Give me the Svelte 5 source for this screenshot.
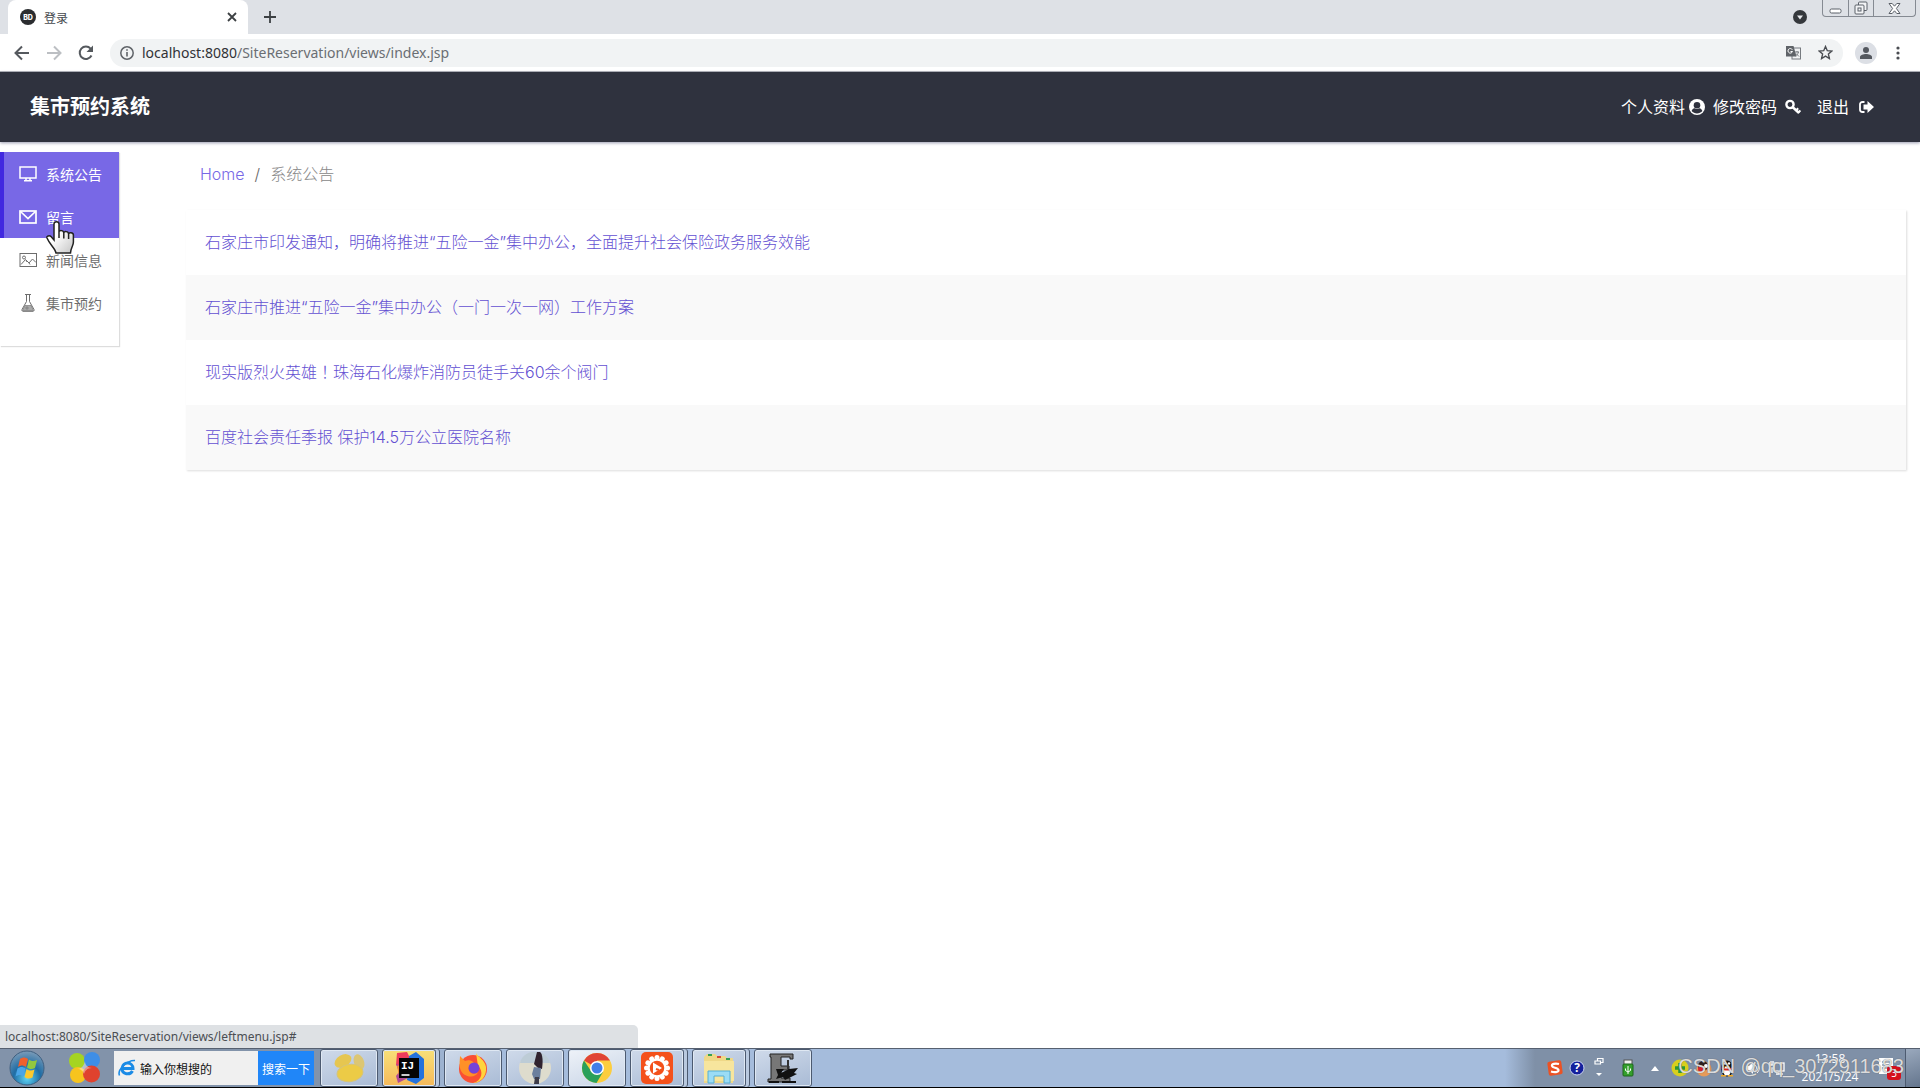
<script>
  const address = { host: "localhost:8080", path: "/SiteReservation/views/index.jsp" };

  const menu = [
    { label: "系统公告", icon: "screen", active: true },
    { label: "留言", icon: "mail", active: true },
    { label: "新闻信息", icon: "picture", active: false },
    { label: "集市预约", icon: "flask", active: false }
  ];

  const notices = [
    "石家庄市印发通知，明确将推进“五险一金”集中办公，全面提升社会保险政务服务效能",
    "石家庄市推进“五险一金”集中办公（一门一次一网）工作方案",
    "现实版烈火英雄！珠海石化爆炸消防员徒手关60余个阀门",
    "百度社会责任季报 保护14.5万公立医院名称"
  ];

  const apps = [
    { name: "blob", title: "Search" },
    { name: "idea", title: "IntelliJ IDEA" },
    { name: "firefox", title: "Firefox" },
    { name: "photo", title: "Photo" },
    { name: "chrome", title: "Chrome" },
    { name: "recorder", title: "Recorder" },
    { name: "explorer", title: "Explorer" },
    { name: "editor", title: "Editor" }
  ];
  const stacked = ["idea", "recorder", "explorer"];

  let keyword = $state("输入你想搜的");

  // the exclamation mark is set apart so it can sit in the middle of its cell
  function splitMarks(text) {
    return text.split(/(！)/).map((part, i) => ({ part, mark: i % 2 === 1 }));
  }
</script>

<div class="desktop">
  <!-- browser chrome -->
  <div class="tabs">
    <div class="tab">
      <svg class="favicon" viewBox="0 0 16 16">
        <circle cx="8" cy="8" r="8" fill="#2b2d30" />
        <text x="8" y="10.5" text-anchor="middle" font-size="7" font-weight="800" font-family="Inter, sans-serif" fill="#fff">BD</text>
      </svg>
      <span class="tab-title">登录</span>
      <button class="tab-close" aria-label="Close tab">
        <svg width="10" height="10" viewBox="0 0 10 10"><path d="M1 1l8 8M9 1l-8 8" stroke="#3c4043" stroke-width="1.8" /></svg>
      </button>
    </div>
    <button class="tab-new" aria-label="New tab">
      <svg width="12" height="12" viewBox="0 0 12 12"><path d="M6 0v12M0 6h12" stroke="#3c4043" stroke-width="1.8" /></svg>
    </button>
    <button class="tab-search" aria-label="Search tabs">
      <svg width="14" height="14" viewBox="0 0 14 14"><circle cx="7" cy="7" r="7" fill="#35383c" /><path d="M4 5.500h6l-3 4z" fill="#e8eaed" /></svg>
    </button>
    <div class="win-buttons">
      <button aria-label="Minimize">
        <svg width="13" height="13" viewBox="0 0 13 13"><rect x="1" y="7" width="11" height="4" rx="1.500" fill="#fff" stroke="#5b6068" /></svg>
      </button>
      <button aria-label="Restore">
        <svg width="14" height="14" viewBox="0 0 14 14" fill="#f3f4f6" stroke="#5b6068"><rect x="4.500" y="1" width="8.500" height="8.500" rx="1" /><rect x="1" y="4" width="9" height="9" rx="1" /><rect x="4" y="7" width="3" height="3" /></svg>
      </button>
      <button class="wide" aria-label="Close">
        <svg width="13" height="13" viewBox="0 0 13 13"><path d="M1 1.500h3.200l2.300 2.700 2.300-2.700H12L8.400 6.500l3.600 5H8.800L6.500 8.800l-2.300 2.700H1l3.600-5z" fill="#fff" stroke="#5b6068" /></svg>
      </button>
    </div>
  </div>

  <div class="toolbar">
    <button class="nav" aria-label="Back">
      <svg width="16" height="16" viewBox="0 0 16 16" fill="none" stroke="#55595e" stroke-width="2"><path d="M15 8H2M8 1.500L1.500 8 8 14.500" /></svg>
    </button>
    <button class="nav" aria-label="Forward">
      <svg width="16" height="16" viewBox="0 0 16 16" fill="none" stroke="#bcbfc3" stroke-width="2"><path d="M1 8h13M8 1.500L14.500 8 8 14.500" /></svg>
    </button>
    <button class="nav" aria-label="Reload">
      <svg width="16" height="16" viewBox="0 0 16 16" fill="none" stroke="#55595e" stroke-width="2"><path d="M13.500 10.500A6.200 6.200 0 1 1 12.600 3.600L14 5" /><path d="M15 0.500v6.500H8.500z" fill="#55595e" stroke="none" /></svg>
    </button>
    <div class="omnibox">
      <svg width="14" height="14" viewBox="0 0 14 14" fill="none" stroke="#5f6368"><circle cx="7" cy="7" r="6.200" stroke-width="1.500" /><path d="M7 6v4.500M7 3.200v1.600" stroke-width="1.600" /></svg>
      <span class="url"><b>{address.host}</b>{address.path}</span>
      <button aria-label="Translate">
        <svg width="15" height="15" viewBox="0 0 15 15"><rect x="6" y="3" width="8.500" height="11" fill="#f1f3f4" stroke="#777b80" /><path d="M0 1h7.500l3 10.500H0z" fill="#5f6368" /><path d="M6.300 4.700A2.300 2.300 0 1 0 6.500 6.500H4.500" fill="none" stroke="#fff" /><path d="M9 7h4M11 6v1M12.500 7c-.5 2-2 3.500-3 4M10 8.500l3 3" fill="none" stroke="#777b80" /></svg>
      </button>
      <button class="star" aria-label="Bookmark">
        <svg width="15" height="15" viewBox="0 0 15 15"><path d="M7.500 1.500l1.800 4.200 4.500.4-3.400 3 1 4.400-3.900-2.400-3.900 2.400 1-4.400-3.400-3 4.500-.4z" fill="none" stroke="#4a4d52" stroke-width="1.400" /></svg>
      </button>
    </div>
    <button class="avatar" aria-label="Profile">
      <svg width="14" height="14" viewBox="0 0 14 14" fill="#54585f"><circle cx="7" cy="4" r="3" /><path d="M1 13v-2c0-2 3.500-3 6-3s6 1 6 3v2z" /></svg>
    </button>
    <button aria-label="Menu">
      <svg width="4" height="14" viewBox="0 0 4 14" fill="#4a4d52"><circle cx="2" cy="2" r="1.600" /><circle cx="2" cy="7" r="1.600" /><circle cx="2" cy="12" r="1.600" /></svg>
    </button>
  </div>

  <!-- page -->
  <header>
    <h1>集市预约系统</h1>
    <nav>
      <a href="#profile">个人资料
        <svg width="16" height="16" viewBox="0 0 16 16"><circle cx="8" cy="8" r="8" fill="#fff" /><circle cx="8" cy="6.200" r="3.300" fill="#2f323e" /><path d="M2.600 12C3.500 9.800 5 9.300 5.700 9.300c1.400 1 3.200 1 4.600 0 .9 0 2.300.6 3.100 2.700-2.600 3.300-8.200 3.300-10.800 0z" fill="#2f323e" /></svg>
      </a>
      <a class="password" href="#password">修改密码
        <svg width="16" height="16" viewBox="0 0 16 16" fill="none" stroke="#fff"><circle cx="5" cy="5.500" r="3.600" stroke-width="2.400" /><path d="M7.500 8l6.500 6" stroke-width="2.400" /><path d="M11 11.500l2.200-2.200M13.200 13.700l2.200-2.200" stroke-width="2" /></svg>
      </a>
      <a class="logout" href="#logout">退出
        <svg width="15" height="14" viewBox="0 0 15 14"><path d="M5.500 2H3.500C2 2 1 3 1 4.200v5.600C1 11 2 12 3.500 12h2" fill="none" stroke="#fff" stroke-width="1.800" /><path d="M4.500 4.500h4V1L15 7l-6.500 6V9.500h-4z" fill="#fff" /></svg>
      </a>
    </nav>
  </header>

  <div class="body">
    <aside>
      {#each menu as item}
        <a href="#{item.icon}" class:active={item.active}>
          <svg width="18" height="18" viewBox="0 0 18 18" fill="none" stroke="currentColor">
            {#if item.icon === "screen"}
              <rect x="1" y="2" width="16" height="11" stroke-width="1.500" /><path d="M7 13v2.500M11 13v2.500M5 15.800h8" stroke-width="1.500" />
            {:else if item.icon === "mail"}
              <rect x="1" y="3" width="16" height="12" stroke-width="1.700" /><path d="M1.500 3.500L9 10.500l7.500-7" stroke-width="1.700" />
            {:else if item.icon === "picture"}
              <rect x="1" y="2.500" width="16.500" height="13" /><path d="M2 13.500l4.500-5 3.500 3.500 3.500-4 3.500 3.500M7 9l1 2M10 12l1 1.500" /><circle cx="5" cy="6.500" r="1.500" />
            {:else}
              <path d="M6 .5h6M7.500 1v6.500L3 15.500c-.3 1 .2 1.800 1 1.800h10c.8 0 1.300-.8 1-1.800L10.500 7.500V1" /><path d="M6 11.500h6l2.500 5h-11z" fill="#aaa" stroke-width=".6" /><circle cx="8" cy="14" r="1" fill="#fff" />
            {/if}
          </svg>
          {item.label}
        </a>
      {/each}
    </aside>

    <main>
      <div class="breadcrumb"><a href="#home">Home</a><i>/</i><span>系统公告</span></div>
      <ul>
        {#each notices as notice}
          <li><a href="#notice">{#each splitMarks(notice) as { part, mark }}<span class:mark>{part}</span>{/each}</a></li>
        {/each}
      </ul>
    </main>
  </div>

  <div class="status">localhost:8080/SiteReservation/views/leftmenu.jsp#</div>

  <svg class="cursor" width="30" height="34" viewBox="0 0 30 34">
    <defs><linearGradient id="hand" x1="0" y1="0" x2="1" y2="1"><stop offset="0.400" stop-color="#fff" /><stop offset="1" stop-color="#c4c4c4" /></linearGradient></defs>
    <path d="M8 3c0-3 5-3 5 0v8c0-2 4.800-2 4.800 1 0-2 4.800-2 4.800 1 0-2 4.800-1.500 4.800 1v7c0 4-2.400 5-2.900 11H10C9 27 4 24 1 17c-.8-2 2.500-3 4-1.500L8 19z" fill="url(#hand)" stroke="#222" stroke-width="1.500" />
    <path d="M13 11v6M17.800 12v5.500M22.600 13v5" stroke="#222" stroke-width="1.500" />
  </svg>

  <!-- windows taskbar -->
  <footer>
    <button class="start" aria-label="Start">
      <svg width="36" height="36" viewBox="0 0 36 36">
        <defs><radialGradient id="orb" cx=".5" cy=".8" r=".8"><stop offset="0" stop-color="#5fd5f5" /><stop offset=".5" stop-color="#1f6da5" /><stop offset="1" stop-color="#7d9cb8" /></radialGradient></defs>
        <circle cx="18" cy="18" r="17" fill="url(#orb)" stroke="#3f5f80" />
        <path d="M11 9c3-2 5-2 8 0l-2 8c-3-2-5-2-8 0z" fill="#f0602c" /><path d="M20 9.500c3 2 5 2 8 .5l-2 8c-3 1.500-5 1.500-8-.5z" fill="#93c83e" /><path d="M8.500 18.500c3-2 5-2 8 0l-2 8c-3-2-5-2-8 0z" fill="#4aa5e8" /><path d="M17.500 19c3 2 5 2 8 .5l-2 8c-3 1.500-5 1.500-8-.5z" fill="#fcc92f" />
      </svg>
    </button>
    <button class="balls" aria-label="Apps">
      <svg width="32" height="32" viewBox="0 0 32 32"><circle cx="8" cy="9" r="8" fill="#a5d422" /><circle cx="23" cy="8" r="8" fill="#3e8ee6" /><circle cx="9" cy="23" r="8" fill="#f7c41e" /><circle cx="22.500" cy="22" r="8.500" fill="#e0422e" /><path d="M8 17c4 0 7-3 8-8 0 4 3 7 7 7-5 0-7 3-8 6-1-3-3-5-7-5z" fill="#fff" opacity=".4" /></svg>
    </button>
    <div class="search">
      <svg width="18" height="18" viewBox="0 0 18 18" fill="none"><path d="M3.500 9.500h11.500c0-7-10.500-7.500-11 0 0 6 8 7 10.500 2.500" stroke="#1b8be6" stroke-width="3" /><path d="M1.500 16.500C-1 11 9 1 17 1.500" stroke="#1b8be6" stroke-width="1.600" /></svg>
      <input aria-label="搜索" bind:value={keyword} />
      <button>搜索一下</button>
    </div>

    <div class="apps">
      {#each apps as app}
        <button class="app {app.name}" class:stacked={stacked.includes(app.name)} aria-label={app.title}>
          <svg width="32" height="32" viewBox="0 0 32 32">
            {#if app.name === "blob"}
              <ellipse cx="10" cy="9" rx="9" ry="6" transform="rotate(-30 10 9)" fill="#e6c650" /><ellipse cx="26" cy="10" rx="5" ry="8" transform="rotate(-20 26 10)" fill="#dcc673" /><ellipse cx="17" cy="21" rx="13" ry="8.500" transform="rotate(-8 17 21)" fill="#eccb46" stroke="#d8c473" />
            {:else if app.name === "idea"}
              <path d="M4 1l10-1 4 8-8 9-7-4z" fill="#ef3c5b" /><path d="M16 4l7-4 8 7v19l-8 6-9-4z" fill="#2472dc" /><path d="M3 12l8 2 4 12-10 5-2-7 3-4z" fill="#b04a96" /><path d="M4 14l6-2v12H6z" fill="#f28a35" />
              <rect x="6" y="6" width="20" height="20" fill="#050505" /><text x="8" y="17" font-size="11" font-weight="700" font-family="Liberation Mono, monospace" fill="#fff">IJ</text><path d="M8.500 23h8" stroke="#fff" stroke-width="1.600" />
            {:else if app.name === "firefox"}
              <circle cx="16" cy="17" r="14" fill="#fa4f33" /><path d="M19 1c2 4 9 7 10 14 1 9-5 16-13 16 9-2 11-12 5-17z" fill="#ffd43d" /><path d="M3 4l5 5c4-2 9 0 10 4l-6 2c-2 5 5 9 9 5-2 7-16 6-18-4-1-5 0-8 0-12z" fill="#ff9127" /><circle cx="17" cy="16" r="5.500" fill="#7543d7" />
            {:else if app.name === "photo"}
              <circle cx="16" cy="16" r="16" fill="#dedccd" /><path d="M1 11h30c-3-15-27-15-30 0z" fill="#bdccd6" /><path d="M18 0h3c3 2 3 10 2 17l-4-1-4-4z" fill="#30232e" /><path d="M15 15l7 1-1 11h-6l-2-5z" fill="#6b7f9d" /><path d="M16 25h4v7h-5z" fill="#3d3c49" />
            {:else if app.name === "chrome"}
              <circle cx="16" cy="16" r="15" fill="#fccd3f" /><path d="M16 16L3 8.500A15 15 0 0 1 29 8.500H16z" fill="#e04436" /><path d="M3 8.500A15 15 0 0 0 15.500 31L22 20l-12-1z" fill="#2aa05a" /><circle cx="16" cy="16" r="7" fill="#fff" /><circle cx="16" cy="16" r="5.500" fill="#427fe8" />
            {:else if app.name === "recorder"}
              <rect width="32" height="32" rx="5" fill="#f4511b" />
              {#each Array(12) as _, i}
                <circle cx="16" cy="5.500" r="2.500" fill="#fff" transform="rotate({i * 30} 16 16)" />
              {/each}
              <circle cx="16" cy="16" r="8.500" fill="none" stroke="#fff" stroke-width="2.500" /><path d="M12 10.500l9 5.500-9 5.500z" fill="#fff" /><path d="M15 17l3 1" stroke="#f4511b" stroke-width="2" />
            {:else if app.name === "explorer"}
              <path d="M1 5l3-3h8l2 2h8l2 2h6v25H1z" fill="#efd887" /><path d="M1 9h30v20H1z" fill="#f7e59d" /><path d="M5 3h4M23 7h4" stroke="#36a052" stroke-width="2" /><path d="M14 5h4" stroke="#d8483a" stroke-width="2" /><path d="M5 31V19h22v12h-6v-7H11v7z" fill="#9bdcf5" stroke="#54aed4" />
            {:else}
              <path d="M3 2h23v5h-3V5h-9v9h8v4h-8v8h9v4H1v-3h3V5H3z" fill="#777" stroke="#222" /><path d="M21 8v9" stroke="#333" stroke-width="2" /><path d="M9 17h8l-3 4 8-4 9-1-4 5 3 1-8 4-4 2-2-3-7 2 2-4z" fill="#111" /><path d="M2 30h10M15 30h14" stroke="#111" stroke-width="2" />
            {/if}
          </svg>
        </button>
      {/each}
    </div>

    <div class="tray">
      <svg width="16" height="16" viewBox="0 0 16 16"><rect x="1" y="1" width="14" height="14" rx="2" transform="rotate(-8 8 8)" fill="#eb5224" /><path d="M12 4C8 3 4.500 4 5 6s6 1.500 6.500 4-4.500 2.500-7.500 1.500" fill="none" stroke="#fff" stroke-width="2.200" /></svg>
      <svg class="help" width="16" height="16" viewBox="0 0 16 16"><circle cx="8" cy="8" r="7" fill="#14209c" stroke="#cbd4ef" /><text x="8" y="12" text-anchor="middle" font-size="12" font-weight="700" font-family="Open Sans, sans-serif" fill="#fff">?</text></svg>
      <svg class="lang" width="10" height="22" viewBox="0 0 10 22"><path d="M3.500 4V1.500h5.500v4H7M1 4h5.500v3H1z" fill="none" stroke="#fff" stroke-width="1.200" /><path d="M2 16h6l-3 3z" fill="#fff" /></svg>
      <svg class="usb" width="12" height="18" viewBox="0 0 12 18"><rect x="2" y="1" width="8" height="5" fill="#eee" stroke="#555" /><rect x="1" y="5" width="10" height="12" rx="1" fill="#34a02c" stroke="#1c651a" /><path d="M6 7v8M3.500 9.500v2L6 13l2.500-1.500v-2" fill="none" stroke="#fff" /></svg>
      <svg class="up" width="8" height="5" viewBox="0 0 8 5"><path d="M4 0l4 5H0z" fill="#fff" /></svg>
      <svg class="guard" width="18" height="18" viewBox="0 0 18 18"><circle cx="9" cy="9" r="8.500" fill="#d8cf1d" /><path d="M4 9h10M9 4v10" stroke="#2a9836" stroke-width="3.500" /></svg>
      <svg class="horse" width="18" height="18" viewBox="0 0 18 18"><circle cx="9" cy="10" r="7.500" fill="#e79b59" /><circle cx="8" cy="7" r="5" fill="#2b1e1d" /><circle cx="6" cy="10" r="3" fill="#d9232b" /><circle cx="11" cy="7" r="2" fill="#fff" /></svg>
      <svg class="penguin" width="16" height="18" viewBox="0 0 16 18"><ellipse cx="8" cy="9.500" rx="6" ry="8" fill="#131313" /><ellipse cx="8" cy="12" rx="3.800" ry="4.500" fill="#fff" /><path d="M2.500 8c3 2 8 2 11 0v2c-3 2-8 2-11 0z" fill="#d9261c" /><circle cx="6" cy="4.500" r="1.200" fill="#fff" /><circle cx="10" cy="4.500" r="1.200" fill="#fff" /><path d="M5 7h6l-3 1.500zM2 16h5v1.500H2zM9 16h5v1.500H9z" fill="#f2a922" /></svg>
      <svg class="sound" width="14" height="14" viewBox="0 0 14 14"><path d="M0 5h3l4-4v12L3 9H0z" fill="#fff" /><path d="M9 4c2 2 2 4 0 6M11 2c3 3 3 7 0 10" fill="none" stroke="#fff" /></svg>
      <svg width="16" height="16" viewBox="0 0 16 16" fill="none" stroke="#fff" stroke-width="1.300"><rect x="5" y="3" width="10" height="8" /><path d="M7 14h7M10 11v3M2 1v4M4 1v4M1 5h4v3H3v5" /></svg>
      <time><span>13:58</span><span>2021/5/24</span></time>
      <svg width="24" height="24" viewBox="0 0 24 24"><path d="M2 2h14v16H2z" fill="#fff" /><path d="M5 6h8M5 9h8M5 12h8" stroke="#5b6a7e" /><rect x="10" y="10" width="14" height="14" rx="3" fill="#d5101c" /><text x="17" y="21" text-anchor="middle" font-size="10" font-family="Open Sans, sans-serif" fill="#fff">3</text></svg>
      <button class="peek" aria-label="Show desktop"></button>
    </div>
  </footer>
  <div class="watermark">CSDN @qq_3072911683</div>
</div>

<style>
  :global(body) {
    margin: 0;
  }

  .desktop {
    position: relative;
    min-height: 100vh;
    box-sizing: border-box;
    display: flex;
    flex-direction: column;
    border-bottom: 1px solid #000;
    background: #fff;
    font-family: Inter, "Noto Sans CJK SC", sans-serif;
    font-size: 16px;
    overflow: hidden;
  }

  button {
    border: 0;
    padding: 0;
    background: transparent;
    display: flex;
    align-items: center;
    justify-content: center;
    font: inherit;
  }

  a {
    text-decoration: none;
  }

  svg {
    flex: none;
    display: block;
  }

  .tabs {
    display: flex;
    height: 34px;
    background: #dee1e6;
    padding-left: 8px;
  }

  .tab {
    width: 240px;
    box-sizing: border-box;
    padding: 0 11px 0 12px;
    display: flex;
    align-items: center;
    gap: 8px;
    background: #fff;
    border-radius: 8px 8px 0 0;
  }

  .favicon {
    width: 16px;
    height: 16px;
  }

  .tab-title {
    flex: 1;
    font-size: 12px;
    color: #45484d;
  }

  .tab-new {
    width: 44px;
  }

  .tab-search {
    margin-left: auto;
    margin-right: 15px;
  }

  .win-buttons {
    display: flex;
    height: 16px;
    border: 1px solid #858a92;
    border-top: 0;
    border-radius: 0 0 4px 4px;
    margin-right: 4px;
  }

  .win-buttons button {
    width: 25px;
  }

  .win-buttons button + button {
    border-left: 1px solid #858a92;
  }

  .win-buttons .wide {
    width: 42px;
  }

  .toolbar {
    height: 38px;
    box-sizing: border-box;
    padding: 0 20px 0 14px;
    display: flex;
    align-items: center;
    border-bottom: 1px solid #aeb0b5;
  }

  .nav {
    width: 16px;
    margin-right: 16px;
  }

  .omnibox {
    flex: 1;
    height: 28px;
    padding: 0 10px;
    display: flex;
    align-items: center;
    border-radius: 14px;
    background: #f1f3f4;
  }

  .url {
    flex: 1;
    margin-left: 8px;
    font-family: "Noto Sans", sans-serif;
    font-size: 14px;
    line-height: 20px;
    color: #6a6e73;
  }

  .url b {
    font-weight: 400;
    color: #303236;
  }

  .star {
    margin-left: 17px;
  }

  .avatar {
    width: 22px;
    height: 22px;
    margin: 0 19px 0 12px;
    border-radius: 50%;
    background: #dcdfe5;
  }

  header {
    height: 70px;
    padding: 0 46px 0 30px;
    display: flex;
    align-items: center;
    justify-content: space-between;
    background: #2f323e;
    color: #fff;
    box-shadow: 0 1px 3px #9a9cb0;
  }

  h1 {
    margin: 0;
    font-size: 20px;
    line-height: 28px;
    font-weight: 700;
  }

  nav {
    display: flex;
  }

  nav a {
    display: flex;
    align-items: center;
    gap: 4px;
    margin-left: 8px;
    line-height: 24px;
    color: #fff;
  }

  nav .password {
    gap: 8px;
  }

  nav .logout {
    gap: 10px;
    margin-left: 16px;
  }

  .body {
    flex: 1;
    display: flex;
    align-items: flex-start;
    padding-top: 10px;
  }

  aside {
    width: 119px;
    padding-bottom: 22px;
    box-shadow: 1px 1px 1px #ddd;
  }

  aside a {
    height: 43px;
    display: flex;
    align-items: center;
    gap: 9px;
    padding-left: 15px;
    border-left: 4px solid transparent;
    font-size: 14px;
    color: #6d6d6d;
  }

  aside a.active {
    border-left-color: #4128e0;
    background: #7868e6;
    color: #fff;
  }

  main {
    flex: 1;
    padding: 8px 14px 0 67px;
  }

  .breadcrumb {
    display: flex;
    gap: 10px;
    padding-left: 14px;
    line-height: 28px;
    font-weight: 300;
    color: #888;
  }

  .breadcrumb a {
    color: #7868e6;
  }

  i {
    font-style: normal;
    color: #666;
  }

  ul {
    list-style: none;
    margin: 22px 0 0;
    padding: 0;
    box-shadow: 1px 1px 2px #ddd;
  }

  li {
    padding: 20px 19px;
    line-height: 25px;
    font-weight: 300;
  }

  li:nth-child(even) {
    background: #f9f9f9;
  }

  li a {
    color: #6350d2;
  }

  .mark {
    font-family: "Noto Sans CJK TC", sans-serif;
    line-height: 1;
  }

  .status {
    width: 638px;
    height: 23px;
    box-sizing: border-box;
    padding-left: 5px;
    border-radius: 0 5px 0 0;
    background: #dee1e4;
    font-family: "Noto Sans", sans-serif;
    font-size: 12px;
    line-height: 24px;
    color: #4b4e53;
  }

  .cursor {
    position: absolute;
    left: 46px;
    top: 221px;
  }

  footer {
    display: flex;
    align-items: center;
    height: 38px;
    border-top: 1px solid #566070;
    background: linear-gradient(90deg, #8293aa 0, #8293aa 320px, #a5bcdc 480px, #a5bcdc calc(100% - 415px), #7f90a7 calc(100% - 385px));
  }

  .start {
    margin: 0 24px 0 9px;
  }

  .search {
    display: flex;
    align-items: center;
    height: 34px;
    margin: 0 6px 0 13px;
    padding-left: 4px;
    background: #f0f0f0;
  }

  .search input {
    width: 119px;
    box-sizing: border-box;
    border: 0;
    padding: 0 0 0 4px;
    margin-right: 3px;
    background: transparent;
    font: 12px "Noto Sans CJK SC", sans-serif;
    color: #111;
  }

  .search button {
    width: 56px;
    height: 34px;
    background: #2086f8;
    color: #fff;
    font-size: 12px;
  }

  .apps {
    display: flex;
    gap: 4px;
    height: 38px;
  }

  .app {
    width: 58px;
    box-sizing: border-box;
    border: 1px solid #4c5a70;
    border-radius: 3px;
    background: linear-gradient(160deg, #cfdaea, #a9bbd5);
    box-shadow: inset 0 0 0 1px #dfe8f3;
  }

  .app.chrome {
    background: linear-gradient(160deg, #eef2f8, #c6d3e6);
  }

  .app.idea {
    background: linear-gradient(180deg, #f8e078, #f5b95a);
  }

  .app.stacked {
    width: 54px;
    margin-right: 4px;
    box-shadow: inset 0 0 0 1px #dfe8f3, 3px 0 0 #b9c9df, 4px 0 0 #4c5a70;
  }

  .tray {
    margin-left: auto;
    height: 38px;
    display: flex;
    align-items: center;
    gap: 4px;
  }

  .help,
  .horse,
  .penguin {
    margin-left: 2px;
  }

  .lang {
    margin: 0 14px 0 5px;
  }

  .up {
    margin: 0 8px 0 13px;
  }

  .sound {
    margin: 0 5px 0 7px;
  }

  time {
    width: 82px;
    margin-right: 2px;
    display: flex;
    flex-direction: column;
    align-items: center;
    font-family: "Open Sans", sans-serif;
    font-size: 12px;
    line-height: 18px;
    color: #fff;
  }

  .peek {
    width: 15px;
    height: 38px;
    background: linear-gradient(160deg, #9aa9bd, #64758d);
    border-left: 1px solid #4d5b70;
  }

  .watermark {
    position: absolute;
    right: 16px;
    bottom: 8px;
    font-family: "Liberation Sans", sans-serif;
    font-size: 20px;
    line-height: 26px;
    color: rgba(255, 255, 255, 0.8);
    text-shadow: 0 0 1px #555;
    white-space: nowrap;
  }
</style>
